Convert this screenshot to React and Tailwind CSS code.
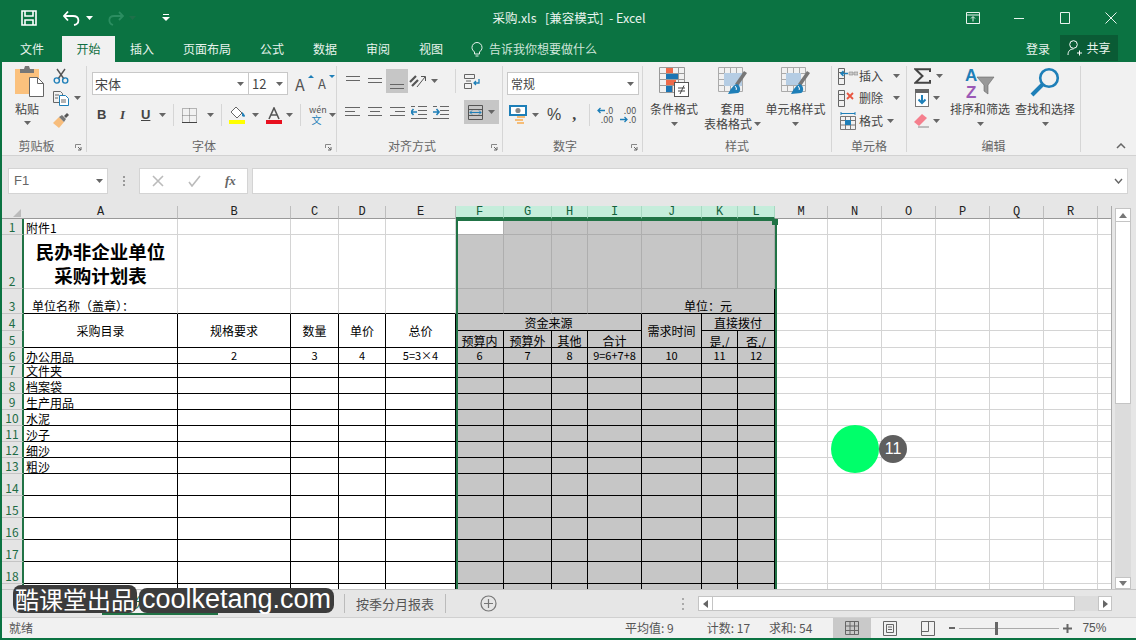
import React from 'react';

// --- helpers ---
const GRID_LINE = "border-r border-b border-[#d4d4d4] bg-white";
const BLACK = "border-r border-b border-black bg-white";
const GRAY = "border-r border-b border-[#aeaeae] bg-[#c6c6c6]";
const GRAY_BLACK = "border-r border-b border-black bg-[#c6c6c6]";
const CENTER = "flex items-center justify-center overflow-hidden whitespace-nowrap leading-none";
const LEFT = "flex items-end pl-[2px] overflow-hidden whitespace-nowrap leading-none";

const COLS = 'ABCDEFGHIJKLMNOPQR'.split('');
const SELECTED = 'FGHIJKL';
const NAMES = ['文件夹', '档案袋', '生产用品', '水泥', '沙子', '细沙', '粗沙', '', '', '', '', '', ''];

const blank = (n, cls, prefix) =>
    Array.from({ length: n }, (_, i) => <div key={prefix + i} className={cls} />);

const RowHead = ({ n }) => (
    <div className="flex items-end justify-center bg-[#e4e4e4] border-b border-[#c4c4c4] border-r-2 border-r-[#217346] text-[#1d6b45] text-[12px] leading-[14px] overflow-hidden">
        {n}
    </div>
);

const Caret = ({ className = '' }) => (
    <svg width="7" height="4" viewBox="0 0 7 4" className={`shrink-0 ${className}`}>
        <path d="M0 0h7L3.5 4z" fill="#666" />
    </svg>
);

const Lines = ({ rows, stroke = '#666', w = 16, h = 14 }) => (
    <svg width={w} height={h} viewBox={`0 0 ${w} ${h}`} className="shrink-0">
        {rows.map(([y, x1, x2], i) => (
            <path key={i} d={`M${x1} ${y}.5H${x2}`} stroke={stroke} fill="none" />
        ))}
    </svg>
);

// --- ribbon icons ---
const PasteIcon = () => (
    <svg width="29" height="31" viewBox="0 0 29 31">
        <rect x="0" y="3" width="24" height="25" fill="#fbc17d" />
        <path d="M5 3h4l1-3h4l1 3h4v4H5z" fill="#777" />
        <path d="M14.5 11.5h8l6 6v13h-14z" fill="#fff" stroke="#666" />
        <path d="M22.5 11.5v6h6" fill="none" stroke="#666" />
    </svg>
);
const CutIcon = () => (
    <svg width="16" height="16" viewBox="0 0 16 16" fill="none">
        <path d="M4 1l7 10M12 1L5 11" stroke="#555" strokeWidth="1.4" />
        <circle cx="3.8" cy="12.5" r="2.6" stroke="#1e7fb8" strokeWidth="1.4" />
        <circle cx="12.2" cy="12.5" r="2.6" stroke="#1e7fb8" strokeWidth="1.4" />
    </svg>
);
const CopyIcon = () => (
    <svg width="16" height="15" viewBox="0 0 16 15" fill="none">
        <path d="M.5.5h7l2 2v9H.5z" fill="#f1f1f1" stroke="#666" />
        <path d="M6.5 4.5h6l3 3v7h-9z" fill="#fff" stroke="#1e7fb8" />
        <path d="M2 4h4M2 7h3M8 9h5M8 11h5" stroke="#666" />
    </svg>
);
const BrushIcon = () => (
    <svg width="16" height="15" viewBox="0 0 16 15">
        <path d="M0 10l6-6 5 5-5 6z" fill="#f7bd7c" />
        <path d="M6 4l3-2 4 4-2 3z" fill="#777" />
        <path d="M11 3l3-3 2 2-3 3z" fill="#555" />
    </svg>
);
const BorderIcon = () => (
    <svg width="15" height="15" viewBox="0 0 15 15" fill="none" stroke="#777" strokeDasharray="1 1">
        <path d="M.5.5h14v14H.5zM7.5.5v14M.5 7.5h14" />
        <path d="M0 14.5h15" stroke="#444" strokeDasharray="none" />
    </svg>
);
const FillIcon = () => (
    <svg width="18" height="17" viewBox="0 0 18 17">
        <path d="M7 0l6 6-5 5-6-6z" fill="#fff" stroke="#666" />
        <path d="M13 5c2 2 3 3 3 4s-2 1-3 0z" fill="#1e7fb8" />
        <rect x="0" y="13" width="16" height="4" fill="#ffff00" />
    </svg>
);
const FontColorIcon = () => (
    <svg width="16" height="17" viewBox="0 0 16 17">
        <path d="M3 12L8 1l5 11M5 8h6" fill="none" stroke="#555" strokeWidth="1.6" />
        <rect x="0" y="13" width="16" height="4" fill="#e8101f" />
    </svg>
);
const OrientIcon = () => (
    <svg width="17" height="15" viewBox="0 0 17 15" fill="none" stroke="#555">
        <path d="M1 8l6-6M3 12l6-6" strokeWidth="2.2" />
        <path d="M8 13L16 3M12 2.5h4.5V7" />
    </svg>
);
const WrapIcon = () => (
    <svg width="16" height="15" viewBox="0 0 16 15" fill="none">
        <path d="M.5.5h10v4H.5zM.5 9.5h7v5H.5zM2 7h5" stroke="#666" />
        <path d="M15 5v4H10M12 7l-2 2 2 2" stroke="#1e7fb8" strokeWidth="1.3" />
    </svg>
);
const IndentIcon = ({ flip }) => (
    <svg width="16" height="13" viewBox="0 0 16 13" fill="none">
        <path d="M7 .5h9M7 4.5h9M7 8.5h9M0 12.5h16M0 .5h4" stroke="#666" />
        <path d={flip ? 'M0 6h6M3.5 3L6 6l-2.5 3' : 'M6 6H0M2.5 3L0 6l2.5 3'} stroke="#1e7fb8" strokeWidth="1.6" />
    </svg>
);
const MergeIcon = () => (
    <svg width="15" height="15" viewBox="0 0 15 15" fill="none">
        <path d="M.5.5h14v14H.5zM.5 4.5h14M.5 10.5h14" stroke="#555" />
        <path d="M2 7.5h11M4 5.5l-2 2 2 2M11 5.5l2 2-2 2" stroke="#1e7fb8" />
    </svg>
);
const MoneyIcon = () => (
    <svg width="19" height="20" viewBox="0 0 19 20">
        <rect x="1" y="1" width="16" height="9" fill="#fff" stroke="#1e7fb8" strokeWidth="2" />
        <circle cx="9" cy="5.5" r="2.6" fill="#888" />
        <path d="M8 11h8v2H8zM6 14h8v2H6zM8 17h7v2H8z" fill="#f6bd78" />
    </svg>
);
const DecIcon = ({ flip }) => (
    <div className="relative w-[16px] h-[18px] text-[9px] leading-[9px] text-[#555] text-right shrink-0">
        <div>{flip ? '.00' : '.0'}</div>
        <div>{flip ? '.0' : '.00'}</div>
        <svg width="8" height="7" viewBox="0 0 8 7" className={`absolute ${flip ? 'left-0 top-[10px]' : 'left-0 top-[1px]'}`} fill="none" stroke="#1e7fb8" strokeWidth="1.3">
            <path d={flip ? 'M0 3.5h7M4.5 1L7 3.5 4.5 6' : 'M8 3.5H1M3.5 1L1 3.5 3.5 6'} />
        </svg>
    </div>
);
const CondIcon = () => (
    <svg width="30" height="30" viewBox="0 0 30 30">
        <path d="M.5.5h25v25H.5zM.5 6.5h25M.5 12.5h25M.5 18.5h25M7.5.5v25M13.5.5v25M19.5.5v25" fill="none" stroke="#999" />
        <rect x="7" y="1" width="7" height="5" fill="#ee6a4a" />
        <rect x="7" y="7" width="12" height="5" fill="#1b75b4" />
        <rect x="7" y="13" width="10" height="5" fill="#ee6a4a" />
        <rect x="7" y="19" width="6" height="6" fill="#1b75b4" />
        <rect x="15.5" y="15.5" width="14" height="14" fill="#fff" stroke="#555" />
        <path d="M19 21h7M19 24h7M25 18.5l-4 8.5" stroke="#444" fill="none" />
    </svg>
);
const TableStyleIcon = ({ header }) => (
    <svg width="30" height="30" viewBox="0 0 30 30">
        <path d="M.5.5h24v24H.5zM.5 6.5h24M.5 12.5h24M.5 18.5h24M6.5.5v24M12.5.5v24M18.5.5v24" fill="none" stroke="#aaa" />
        <rect x={header ? 5 : 6} y="6" width={header ? 15 : 18} height={header ? 12 : 13} fill="#b5cde4" />
        <path d="M29 6l-9 13-3-2 9-13z" fill="#777" />
        <path d="M19 17c-4 1-7 6-9 10l10-1c3-1 3-7-1-9z" fill="#1e7fb8" />
        <path d="M17 19c1 1 2 3 1 4" stroke="#fff" fill="none" />
    </svg>
);
const CellsIcon = ({ kind }) => (
    <svg width="20" height="17" viewBox="0 0 20 17" fill="none">
        <path d="M.5 4.5h6v6h-6zM.5 10.5h6v6h-6zM.5.5h6v4h-6z" stroke="#666" />
        {kind === 'ins' && <path d="M11 4h4v3h-4zM16 4h4v3h-4z" fill="#ccc" stroke="#888" strokeWidth=".6" />}
        {kind === 'ins' && <path d="M10 5.5H3M5.5 3L3 5.5 5.5 8" stroke="#1e7fb8" strokeWidth="1.5" />}
        {kind === 'del' && <path d="M9 3l6 6M15 3l-6 6" stroke="#e8553f" strokeWidth="1.8" />}
    </svg>
);
const FormatIcon = () => (
    <svg width="17" height="18" viewBox="0 0 17 18" fill="none">
        <path d="M.5 4.5h15v13H.5zM.5 8.5h15M.5 13h15M5.5 4.5v13M10.5 4.5v13" stroke="#777" />
        <rect x="5" y="8" width="6" height="5" fill="#1e7fb8" />
        <path d="M1 1.5h14M1 0v3M15 0v3" stroke="#1e7fb8" />
    </svg>
);
const SumIcon = () => (
    <svg width="17" height="16" viewBox="0 0 17 16" fill="none">
        <path d="M16 4V1.2H1.5L8.5 8l-7 6.8H16V12" stroke="#444" strokeWidth="2" />
    </svg>
);
const FillDownIcon = () => (
    <svg width="14" height="18" viewBox="0 0 14 18" fill="none">
        <rect x=".5" y=".5" width="13" height="17" fill="#fff" stroke="#777" />
        <rect x="0" y="0" width="14" height="4" fill="#666" />
        <path d="M7 6v8M3.5 10.5L7 14l3.5-3.5" stroke="#1e7fb8" strokeWidth="2" />
    </svg>
);
const EraserIcon = () => (
    <svg width="16" height="15" viewBox="0 0 16 15">
        <path d="M0 9l8-8 5 4-8 8z" fill="#f57f8d" />
        <path d="M4 14h11" stroke="#888" fill="none" />
    </svg>
);
const SortIcon = () => (
    <svg width="30" height="32" viewBox="0 0 30 32" fontFamily="Liberation Sans, sans-serif" fontWeight="700" fontSize="17">
        <text x="0" y="14" fill="#1e7fb8">A</text>
        <text x="1" y="31" fill="#9b59b6">Z</text>
        <path d="M12 10h17l-6 8v9l-4-3v-6z" fill="#999" stroke="#666" strokeWidth=".6" />
    </svg>
);
const FindIcon = () => (
    <svg width="30" height="31" viewBox="0 0 30 31" fill="none">
        <circle cx="19" cy="11" r="8.8" stroke="#1e7fb8" strokeWidth="2.6" />
        <path d="M12.5 17.5L2 28" stroke="#1e7fb8" strokeWidth="4" />
    </svg>
);

// --- ribbon pieces ---
const Group = ({ label, launcher, className, children }) => (
    <div className={`flex flex-col h-[86px] mt-[4px] border-r border-[#d6d6d6] shrink-0 ${className}`}>
        <div className="h-[66px] flex">{children}</div>
        <div className={`relative flex-1 flex items-center justify-center text-[12px] text-[#666] leading-none pt-[8px] ${launcher ? 'pr-[15px]' : ''}`}>
            {label}
            {launcher && (
                <svg width="7" height="7" viewBox="0 0 7 7" fill="none" className="absolute right-[4px] bottom-[1px]">
                    <path d="M.5 4V.5H6" stroke="#888" />
                    <path d="M3 3l3 3M6 3v3H3" stroke="#666" />
                </svg>
            )}
        </div>
    </div>
);

const BigButton = ({ icon, lines, className }) => (
    <div className={`flex flex-col items-center text-[12px] text-[#444] leading-[15px] ${className}`}>
        <div className="h-[31px] mt-[1px] mb-[3px]">{icon}</div>
        {lines.map((t) => <div key={t} className="whitespace-nowrap">{t}</div>)}
        {lines.length === 1 && <Caret className="mt-[6px]" />}
    </div>
);

const SmallAction = ({ icon, label, caretClass }) => (
    <div className="flex items-center h-[23px] text-[12px] text-[#444]">
        <div className="w-[20px] flex justify-center">{icon}</div>
        <span className="ml-[1px]">{label}</span>
        <Caret className={caretClass} />
    </div>
);

const WinIcon = ({ d }) => (
    <svg width="14" height="14" viewBox="0 0 14 14" fill="none" stroke="#e8f3ed">
        <path d={d} />
    </svg>
);

const TABS = [
    { t: '文件', c: 'w-[60px]' },
    { t: '开始', c: 'w-[53px] bg-[#f1f1f1] text-[#0f6e42]' },
    { t: '插入', c: 'w-[54px]' },
    { t: '页面布局', c: 'w-[76px]' },
    { t: '公式', c: 'w-[54px]' },
    { t: '数据', c: 'w-[52px]' },
    { t: '审阅', c: 'w-[54px]' },
    { t: '视图', c: 'w-[52px]' },
];

const App = () => (
    <div className="relative w-[1136px] h-[640px] overflow-hidden flex flex-col bg-[#0b7342] pl-[2px] pb-[2px] font-['Noto_Sans_CJK_SC',sans-serif]">
        {/* Title bar */}
        <div className="h-[36px] shrink-0 grid grid-cols-[1fr_auto_1fr] items-center text-[#e8f3ed]">
            <div className="flex items-center pl-[19px]">
                <svg width="16" height="16" viewBox="0 0 16 16" fill="none" stroke="#fff" strokeWidth="1.6">
                    <path d="M1 1h14v14H1zM4 1v5h8V1M4 15v-5h8v5" />
                </svg>
                <svg width="18" height="16" viewBox="0 0 18 16" fill="none" stroke="#fff" strokeWidth="1.8" className="ml-[26px]">
                    <path d="M1 6h9c7 0 7 8 1 9M5 1.5L1 6l4 4.5" />
                </svg>
                <Caret className="ml-[5px] [&>path]:fill-white" />
                <svg width="16" height="15" viewBox="0 0 16 15" fill="none" stroke="#2b8d60" strokeWidth="1.8" className="ml-[15px]">
                    <path d="M15 5H6C0 5 0 12 5 14M11 1l4 4-4 4" />
                </svg>
                <Caret className="ml-[5px] opacity-20" />
                <svg width="8" height="8" viewBox="0 0 8 8" fill="#fff" className="ml-[26px]">
                    <path d="M1 0h6v1H1zM0 3h8L4 7z" />
                </svg>
            </div>
            <div className="text-[12.500px] whitespace-pre">采购.xls   [兼容模式]  - Excel</div>
            <div className="flex items-center justify-end pr-[18px] gap-[32px]">
                <WinIcon d="M.5 1.5h13v11H.5zM.5 4h13M7 10.5V6M5 7.5l2-2 2 2" />
                <WinIcon d="M2 7.5h10" />
                <WinIcon d="M2.5 1.5h9v11h-9z" />
                <WinIcon d="M1.5 1.5l11 11M12.5 1.5l-11 11" />
            </div>
        </div>

        {/* Tabs */}
        <div className="h-[26px] shrink-0 flex items-stretch text-[12px] text-[#e8f3ed]">
            {TABS.map((tab) => (
                <div key={tab.t} className={`flex items-center justify-center ${tab.c}`}>{tab.t}</div>
            ))}
            <div className="flex items-center ml-[14px] text-[#cfe5da]">
                <svg width="12" height="15" viewBox="0 0 12 15" fill="none" stroke="#e8f3ed" className="mr-[6px]">
                    <path d="M3.5 10C2 8.5 1 7.5 1 5.5a5 5 0 0 1 10 0C11 7.5 10 8.5 8.5 10v2h-5zM4.5 14h3" />
                </svg>
                告诉我你想要做什么
            </div>
            <div className="ml-auto mr-[18px] flex items-center">
                <span className="mr-[10px]">登录</span>
                <div className="w-[58px] h-[26px] -mt-[2px] bg-[#0a5b35] flex items-center justify-center gap-[4px]">
                    <svg width="15" height="16" viewBox="0 0 15 16" fill="none" stroke="#fff">
                        <circle cx="6.5" cy="4.5" r="3.8" />
                        <path d="M1 15c0-4 2-6 5.5-6M10 13h5M12.5 10.5v5" />
                    </svg>
                    共享
                </div>
            </div>
        </div>

        {/* Ribbon */}
        <div className="h-[94px] shrink-0 flex bg-[#f1f1f1] border-b border-[#d2d2d2]">
            <Group label="剪贴板" launcher className="w-[85px]">
                <div className="w-[50px] pl-[13px] flex flex-col items-start text-[12px] text-[#444] leading-[15px]">
                    <div className="h-[31px]"><PasteIcon /></div>
                    <div className="mt-[4px] ml-0">粘贴</div>
                    <Caret className="mt-[5px] ml-[9px]" />
                </div>
                <div className="flex flex-col -mt-[1px] pl-[1px]">
                    <div className="h-[23px] flex items-center"><CutIcon /></div>
                    <div className="h-[23px] flex items-center"><CopyIcon /><Caret className="ml-[5px]" /></div>
                    <div className="h-[23px] flex items-center"><BrushIcon /></div>
                </div>
            </Group>

            <Group label="字体" launcher className="w-[250px]">
                <div className="pl-[5px] pt-[6px] flex flex-col">
                    <div className="flex items-center h-[23px]">
                        <div className="w-[157px] h-[23px] bg-white border border-[#c8c8c8] flex items-center justify-between px-[2px] pr-[4px] text-[13px] text-[#444]">宋体<Caret /></div>
                        <div className="w-[39px] h-[23px] bg-white border border-l-0 border-[#c8c8c8] flex items-center justify-between px-[3px] pr-[4px] text-[13px] text-[#444]">12<Caret /></div>
                        <div className="ml-[7px] w-[16px] text-[16px] text-[#555] relative leading-none">A<span className="absolute -top-[1px] -right-[3px] border-x-[3px] border-x-transparent border-b-[3px] border-b-[#1e7fb8]" /></div>
                        <div className="ml-[7px] w-[14px] text-[13px] text-[#555] relative leading-none">A<span className="absolute -top-[2px] -right-[3px] border-x-[3px] border-x-transparent border-t-[3px] border-t-[#1e7fb8]" /></div>
                    </div>
                    <div className="flex items-center h-[24px] mt-[8px] text-[#444]">
                        <span className="ml-[5px] w-[9px] text-[13px] font-bold font-['Liberation_Sans']">B</span>
                        <span className="ml-[14px] w-[8px] text-[13px] italic font-['Liberation_Serif'] font-bold">I</span>
                        <span className="ml-[13px] w-[10px] text-[13px] font-bold underline font-['Liberation_Sans']">U</span>
                        <Caret className="ml-[8px]" />
                        <div className="ml-[7px] w-px h-[22px] bg-[#d6d6d6]" />
                        <div className="ml-[8px]"><BorderIcon /></div>
                        <Caret className="ml-[10px]" />
                        <div className="ml-[7px] w-px h-[22px] bg-[#d6d6d6]" />
                        <div className="ml-[7px]"><FillIcon /></div>
                        <Caret className="ml-[5px]" />
                        <div className="ml-[7px]"><FontColorIcon /></div>
                        <Caret className="ml-[4px]" />
                        <div className="ml-[7px] w-px h-[22px] bg-[#d6d6d6]" />
                        <div className="ml-[8px] w-[15px] text-center leading-[10px] text-[9px] text-[#555]">wén<div className="text-[10px] text-[#1e7fb8]">文</div></div>
                        <Caret className="ml-[5px]" />
                    </div>
                </div>
            </Group>

            <Group label="对齐方式" launcher className="w-[166px]">
                <div className="relative pl-[8px] pt-[3px] flex flex-col">
                    <div className="flex items-center h-[24px] gap-[6px]">
                        <Lines rows={[[2, 1, 15], [6, 1, 15]]} />
                        <Lines rows={[[4, 1, 15], [8, 1, 15]]} />
                        <div className="w-[22px] h-[24px] -mx-[3px] bg-[#c6c6c6] flex items-end justify-center pb-[1px]"><Lines rows={[[6, 1, 15], [10, 1, 15]]} /></div>
                        <div className="-ml-[2px]"><OrientIcon /></div>
                        <Caret className="-ml-[1px]" />
                        <div className="ml-[11px] w-px h-[24px] bg-[#d6d6d6]" />
                        <div className="ml-[2px]"><WrapIcon /></div>
                    </div>
                    <div className="flex items-center h-[24px] mt-[7px] gap-[6px]">
                        <Lines rows={[[2, 0, 15], [6, 0, 10], [10, 0, 15]]} />
                        <Lines rows={[[2, 1, 15], [6, 3, 13], [10, 1, 15]]} />
                        <Lines rows={[[2, 1, 16], [6, 6, 16], [10, 1, 16]]} />
                        <IndentIcon />
                        <IndentIcon flip />
                        <div className="ml-[9px] w-[35px] h-[24px] bg-[#c6c6c6] flex items-center pl-[4px] gap-[5px]"><MergeIcon /><Caret /></div>
                    </div>
                </div>
            </Group>

            <Group label="数字" launcher className="w-[140px]">
                <div className="pl-[4px] pt-[6px] flex flex-col">
                    <div className="w-[132px] h-[23px] bg-white border border-[#c8c8c8] flex items-center justify-between px-[3px] pr-[4px] text-[12px] text-[#444]">常规<Caret /></div>
                    <div className="flex items-center h-[24px] mt-[8px] text-[#444]">
                        <div className="ml-[2px]"><MoneyIcon /></div>
                        <Caret className="ml-[4px]" />
                        <span className="ml-[8px] text-[16px] font-['Liberation_Sans'] leading-none">%</span>
                        <span className="ml-[11px] text-[16px] font-bold font-['Liberation_Serif'] leading-none">,</span>
                        <div className="ml-[13px] w-px h-[22px] bg-[#d6d6d6]" />
                        <div className="ml-[7px]"><DecIcon /></div>
                        <div className="ml-[7px]"><DecIcon flip /></div>
                    </div>
                </div>
            </Group>

            <Group label="样式" className="w-[189px]">
                <BigButton icon={<CondIcon />} lines={['条件格式']} className="w-[62px]" />
                <div className="w-[55px] flex flex-col items-center text-[12px] text-[#444] leading-[15px]">
                    <div className="h-[31px] mt-[1px] mb-[3px]"><TableStyleIcon /></div>
                    <div>套用</div>
                    <div className="flex items-center whitespace-nowrap">表格格式<Caret className="ml-[2px]" /></div>
                </div>
                <BigButton icon={<TableStyleIcon header />} lines={['单元格样式']} className="w-[71px]" />
            </Group>

            <Group label="单元格" className="w-[75px]">
                <div className="flex flex-col pl-[6px] -mt-[1px]">
                    <SmallAction icon={<CellsIcon kind="ins" />} label="插入" caretClass="ml-[10px]" />
                    <SmallAction icon={<CellsIcon kind="del" />} label="删除" caretClass="ml-[10px]" />
                    <SmallAction icon={<FormatIcon />} label="格式" caretClass="ml-[4px]" />
                </div>
            </Group>

            <Group label="编辑" className="w-[174px]">
                <div className="flex flex-col pl-[7px] -mt-[1px] w-[41px]">
                    <div className="h-[23px] flex items-center"><SumIcon /><Caret className="ml-[5px]" /></div>
                    <div className="h-[23px] flex items-center"><div className="ml-[1px]"><FillDownIcon /></div><Caret className="ml-[4px]" /></div>
                    <div className="h-[23px] flex items-center"><EraserIcon /><Caret className="ml-[3px]" /></div>
                </div>
                <BigButton icon={<SortIcon />} lines={['排序和筛选']} className="w-[64px]" />
                <BigButton icon={<FindIcon />} lines={['查找和选择']} className="w-[66px]" />
            </Group>

            <div className="flex-1 flex items-end justify-end pr-[10px] pb-[6px]">
                <svg width="10" height="6" viewBox="0 0 10 6" fill="none" stroke="#666" strokeWidth="1.5"><path d="M1 5l4-4 4 4" /></svg>
            </div>
        </div>

        {/* Formula bar */}
        <div className="h-[50px] shrink-0 bg-[#e6e6e6] flex items-start pt-[12px] pl-[6px] pr-[8px]">
            <div className="w-[100px] h-[26px] bg-white border border-[#d4d4d4] flex items-center justify-between pl-[5px] pr-[4px] text-[13px] text-[#666] font-['Liberation_Sans']">F1<Caret /></div>
            <div className="w-[31px] flex flex-col items-center justify-center h-[26px] gap-[2px]">
                <span className="w-[2px] h-[2px] bg-[#999]" /><span className="w-[2px] h-[2px] bg-[#999]" /><span className="w-[2px] h-[2px] bg-[#999]" />
            </div>
            <div className="w-[109px] h-[26px] bg-white border border-[#d4d4d4] flex items-center pl-[12px] text-[#bbb]">
                <svg width="12" height="12" viewBox="0 0 12 12" fill="none" stroke="#bbb" strokeWidth="1.6"><path d="M1 1l10 10M11 1L1 11" /></svg>
                <svg width="13" height="12" viewBox="0 0 13 12" fill="none" stroke="#bbb" strokeWidth="1.6" className="ml-[24px]"><path d="M1 7l3 4 8-10" /></svg>
                <span className="ml-[24px] text-[13px] italic font-bold text-[#666] font-['Liberation_Serif']">fx</span>
            </div>
            <div className="ml-[4px] flex-1 h-[26px] bg-white border border-[#d4d4d4] flex items-center justify-end pr-[4px]">
                <svg width="9" height="6" viewBox="0 0 9 6" fill="none" stroke="#666" strokeWidth="1.4"><path d="M1 1l3.5 4L8 1" /></svg>
            </div>
        </div>

        {/* Sheet */}
        <div className="h-[383px] shrink-0 flex bg-[#e6e6e6]">
            <div className="relative w-[1110px] h-[383px] overflow-hidden border-r border-[#aaa]">
                <div className="grid grid-cols-[22px_154px_113px_48px_47px_70px_48px_48px_36px_54px_60px_36px_37px_53px_54px_54px_54px_54px_54px_14px] grid-rows-[13px_16px_54px_25px_17px_17px_16px_14px_16px_16px_16px_16px_16px_16px_22px_22px_22px_22px_22px_22px] text-[12px] text-black">
                    {/* column header */}
                    <div className="bg-[#e6e6e6] border-b border-[#999] relative">
                        <span className="absolute right-[3px] bottom-[1px] border-l-[8px] border-l-transparent border-b-[8px] border-b-[#bbb]" />
                    </div>
                    {COLS.map((c) => (
                        SELECTED.includes(c)
                            ? <div key={c} className="flex items-center justify-center bg-[#c5eddb] border-r border-[#a8d9c2] border-b-2 border-b-[#217346] text-[#14613c] font-['Liberation_Mono'] text-[12px] leading-none">{c}</div>
                            : <div key={c} className="flex items-center justify-center bg-[#e6e6e6] border-r border-[#bdbdbd] border-b border-b-[#999] text-[#222] font-['Liberation_Mono'] text-[12px] leading-none">{c}</div>
                    ))}
                    <div className="bg-[#e6e6e6] border-b border-[#999]" />

                    {/* row 1 */}
                    <RowHead n="1" />
                    <div className={`${GRID_LINE} ${LEFT}`}>附件1</div>
                    {blank(4, GRID_LINE, 'r1b')}
                    <div className="bg-white border-b border-r border-[#aeaeae]" />
                    {blank(6, GRAY, 'r1g')}
                    {blank(7, GRID_LINE, 'r1m')}

                    {/* row 2 */}
                    <RowHead n="2" />
                    <div className={`${GRID_LINE} flex items-center justify-center text-center text-[18.500px] leading-[24px] font-bold pt-[2px] whitespace-nowrap`}>民办非企业单位<br />采购计划表</div>
                    {blank(4, GRID_LINE, 'r2b')}
                    {blank(7, GRAY, 'r2g')}
                    {blank(7, GRID_LINE, 'r2m')}

                    {/* row 3 */}
                    <RowHead n="3" />
                    <div className={`${BLACK} border-r-[#d4d4d4] flex items-end pl-[8px] pb-px leading-none whitespace-nowrap`}>单位名称（盖章）：</div>
                    {blank(4, `${BLACK} border-r-[#d4d4d4]`, 'r3b')}
                    {blank(4, `${GRAY_BLACK} border-r-[#aeaeae]`, 'r3g')}
                    <div className={`${GRAY_BLACK} col-span-3 flex items-end pl-[42px] pb-px leading-none`}>单位：元</div>
                    {blank(7, GRID_LINE, 'r3m')}

                    {/* rows 4-5 */}
                    <RowHead n="4" />
                    <div className={`${BLACK} ${CENTER} row-span-2`}>采购目录</div>
                    <div className={`${BLACK} ${CENTER} row-span-2`}>规格要求</div>
                    <div className={`${BLACK} ${CENTER} row-span-2`}>数量</div>
                    <div className={`${BLACK} ${CENTER} row-span-2`}>单价</div>
                    <div className={`${BLACK} ${CENTER} row-span-2`}>总价</div>
                    <div className={`${GRAY_BLACK} ${CENTER} col-span-4 pt-[1px]`}>资金来源</div>
                    <div className={`${GRAY_BLACK} ${CENTER} row-span-2`}>需求时间</div>
                    <div className={`${GRAY_BLACK} ${CENTER} col-span-2 pt-[1px]`}>直接拨付</div>
                    {blank(7, GRID_LINE, 'r4m')}
                    <RowHead n="5" />
                    {['预算内', '预算外', '其他', '合计'].map((t) => (
                        <div key={t} className={`${GRAY_BLACK} ${CENTER} pt-[3px]`}>{t}</div>
                    ))}
                    <div className={`${GRAY_BLACK} ${CENTER} pt-[6px]`}>是./</div>
                    <div className={`${GRAY_BLACK} ${CENTER} pt-[6px]`}>否./</div>
                    {blank(7, GRID_LINE, 'r5m')}

                    {/* row 6 */}
                    <RowHead n="6" />
                    <div className={`${BLACK} ${LEFT}`}>办公用品</div>
                    {['2', '3', '4', '5=3×4'].map((t) => (
                        <div key={t} className={`${BLACK} ${CENTER} text-[11px]`}>{t}</div>
                    ))}
                    {['6', '7', '8', '9=6+7+8', '10', '11', '12'].map((t) => (
                        <div key={t} className={`${GRAY_BLACK} ${CENTER} text-[11px]`}>{t}</div>
                    ))}
                    {blank(7, GRID_LINE, 'r6m')}

                    {/* rows 7-19 */}
                    {NAMES.map((name, i) => (
                        <React.Fragment key={i}>
                            <RowHead n={i + 7} />
                            <div className={`${BLACK} ${LEFT}`}>{name}</div>
                            {blank(4, BLACK, `b${i}`)}
                            {blank(7, GRAY_BLACK, `g${i}`)}
                            {blank(7, GRID_LINE, `m${i}`)}
                        </React.Fragment>
                    ))}
                </div>
                {/* selection box */}
                <div className="absolute left-[454px] top-[13px] w-[321px] h-[380px] border-2 border-[#217346]">
                    <span className="absolute -right-[3px] -top-[2px] w-[6px] h-[6px] bg-[#217346]" />
                </div>
            </div>

            {/* vertical scrollbar */}
            <div className="ml-[3px] w-[16px] flex flex-col pt-[2px]">
                <div className="h-[14px] bg-white border border-[#c4c4c4] flex items-center justify-center">
                    <svg width="8" height="5" viewBox="0 0 8 5"><path d="M4 0l4 5H0z" fill="#777" /></svg>
                </div>
                <div className="h-[182px] bg-white border border-[#c4c4c4] border-t-0" />
                <div className="flex-1 bg-[#dcdcdc]" />
                <div className="h-[12px] bg-white border border-[#c4c4c4] flex items-center justify-center">
                    <svg width="8" height="5" viewBox="0 0 8 5"><path d="M4 5l4-5H0z" fill="#777" /></svg>
                </div>
            </div>
        </div>

        {/* Sheet tabs */}
        <div className="h-[28px] shrink-0 bg-[#e6e6e6] border-t border-[#c4c4c4] flex items-stretch text-[13px] text-[#555]">
            <div className="w-[100px]" />
            <div className="w-[116px] mb-[2px] bg-[#f3f3f3] border-b-2 border-[#217346] flex items-center justify-center whitespace-nowrap text-[#217346]">按季分月采购计划</div>
            <div className="w-[127px] flex items-center justify-center my-[4px] border-r border-[#bbb] whitespace-nowrap">按季分月用款</div>
            <div className="w-[101px] flex items-center justify-center my-[4px] border-r border-[#bbb]">按季分月报表</div>
            <div className="ml-[34px] mr-[185px] flex items-center">
                <svg width="17" height="17" viewBox="0 0 17 17" fill="none" stroke="#777" strokeWidth="1.2"><circle cx="8.5" cy="8.5" r="7.5" /><path d="M8.5 4v9M4 8.500h9" /></svg>
            </div>
            <div className="flex flex-col justify-center gap-[3px] w-[16px]">
                <span className="w-[2px] h-[2px] bg-[#aaa]" /><span className="w-[2px] h-[2px] bg-[#aaa]" /><span className="w-[2px] h-[2px] bg-[#aaa]" />
            </div>
            <div className="w-[414px] h-[15px] mt-[6px] flex bg-[#dcdcdc]">
                <div className="w-[15px] bg-white border border-[#c4c4c4] flex items-center justify-center"><svg width="5" height="8" viewBox="0 0 5 8"><path d="M0 4l5-4v8z" fill="#666" /></svg></div>
                <div className="w-[362px] bg-white border-y border-r border-[#c4c4c4]" />
                <div className="flex-1" />
                <div className="w-[14px] bg-white border border-[#c4c4c4] flex items-center justify-center"><svg width="5" height="8" viewBox="0 0 5 8"><path d="M5 4L0 0v8z" fill="#666" /></svg></div>
            </div>
        </div>

        {/* Status bar */}
        <div className="flex-1 bg-[#f1f1f1] border-t border-[#d0d0d0] flex items-center text-[12px] text-[#555] pl-[7px]">
            <span>就绪</span>
            <span className="ml-[592px]">平均值: 9</span>
            <span className="ml-[33px]">计数: 17</span>
            <span className="ml-[19px]">求和: 54</span>
            <div className="ml-[21px] w-[38px] h-full bg-[#c9c9c9] flex items-center justify-center">
                <svg width="14" height="14" viewBox="0 0 14 14" fill="none" stroke="#666"><path d="M.5.5h13v13H.5zM.5 5h13M.5 9.5h13M5 .5v13M9.5.5v13" /></svg>
            </div>
            <div className="w-[38px] flex justify-center">
                <svg width="14" height="15" viewBox="0 0 14 15" fill="none" stroke="#666"><path d="M.5.5h13v14H.5zM3.5 3.5h7v8h-7zM5 6h4M5 8.5h4" /></svg>
            </div>
            <div className="w-[38px] flex justify-center">
                <svg width="14" height="15" viewBox="0 0 14 15" fill="none" stroke="#666"><path d="M.5.5h13v14H.5zM.5 10.5h7v-10" /></svg>
            </div>
            <span className="ml-[2px] w-[6px] h-[2px] bg-[#666]" />
            <div className="relative ml-[4px] w-[100px] h-px bg-[#aaa]">
                <span className="absolute left-[36px] -top-[6px] w-[3px] h-[13px] bg-[#666]" />
            </div>
            <svg width="9" height="9" viewBox="0 0 9 9" className="ml-[4px]" stroke="#666" strokeWidth="2"><path d="M0 4.500h9M4.500 0v9" /></svg>
            <span className="ml-[10px] font-['Liberation_Sans']">75%</span>
        </div>

        {/* Watermark */}
        <div className="absolute left-[13px] top-[585px] h-[28px] px-[2px] bg-[#3c3c3c] rounded-lg flex items-center text-white text-[24px] leading-none whitespace-nowrap">酷课堂出品</div>
        <div className="absolute left-[139px] top-[588px] h-[25px] px-[3px] pb-[3px] bg-[#3c3c3c] rounded-lg flex items-center text-white text-[27px] leading-none whitespace-nowrap font-['Liberation_Sans']">coolketang.com</div>

        {/* Click marker */}
        <div className="absolute left-[831px] top-[425px] w-[48px] h-[48px] rounded-full bg-[#00ff6a]" />
        <div className="absolute left-[879px] top-[435px] w-[28px] h-[28px] rounded-full bg-[#5f5f5f] flex items-center justify-center text-white text-[16px] font-['Liberation_Sans']">11</div>
    </div>
);

export default App;
